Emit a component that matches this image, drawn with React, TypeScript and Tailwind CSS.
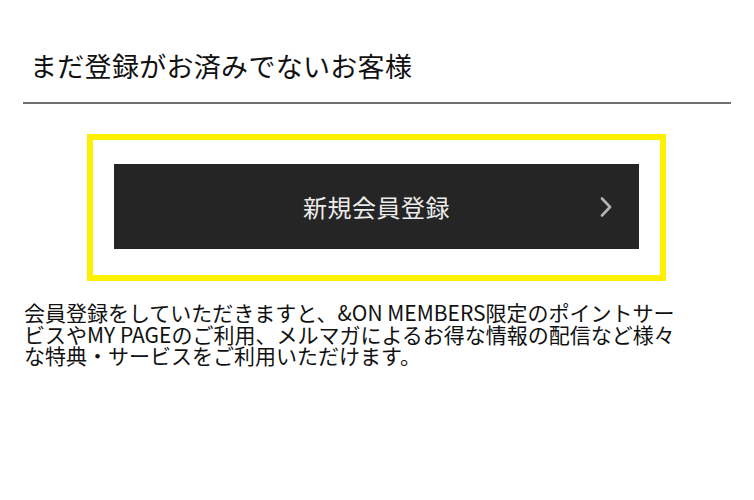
export default function App() {
  return (
    <div
      className="min-h-[500px] bg-white px-[23px] text-[#111]"
      style={{ fontFamily: '"Noto Sans CJK JP", "Noto Sans", sans-serif' }}
    >
      <div className="border-b-2 border-[#6f6f6f] pb-[16px] pl-[7px] pt-[45px]">
        <h2 className="text-[27px] font-normal leading-[41px] tracking-[0.3px]">
          まだ登録がお済みでないお客様
        </h2>
      </div>

      <div className="ml-[64px] mt-[30px] w-[579px] border-[6px] border-[#fff000] px-[21px] pb-[26px] pt-[24px]">
        <button className="relative flex h-[85px] w-full items-center justify-center bg-[#252525] text-[24px] tracking-[0.5px] text-[#ececec]">
          新規会員登録
          <svg
            className="absolute right-[27px] top-1/2 -translate-y-1/2"
            width="12"
            height="20"
            viewBox="0 0 12 20"
            fill="none"
          >
            <path
              d="M2 1.5L10 10L2 18.5"
              stroke="#b3b3b3"
              strokeWidth="2.6"
              strokeLinecap="round"
              strokeLinejoin="round"
            />
          </svg>
        </button>
      </div>

      <p className="mt-[21px] pl-[1px] text-[21px] leading-[21.5px] text-[#111]">
        会員登録をしていただきますと、&amp;ON MEMBERS限定のポイントサー
        <br />
        ビスやMY PAGEのご利用、メルマガによるお得な情報の配信など様々
        <br />
        な特典・サービスをご利用いただけます。
      </p>
    </div>
  );
}
